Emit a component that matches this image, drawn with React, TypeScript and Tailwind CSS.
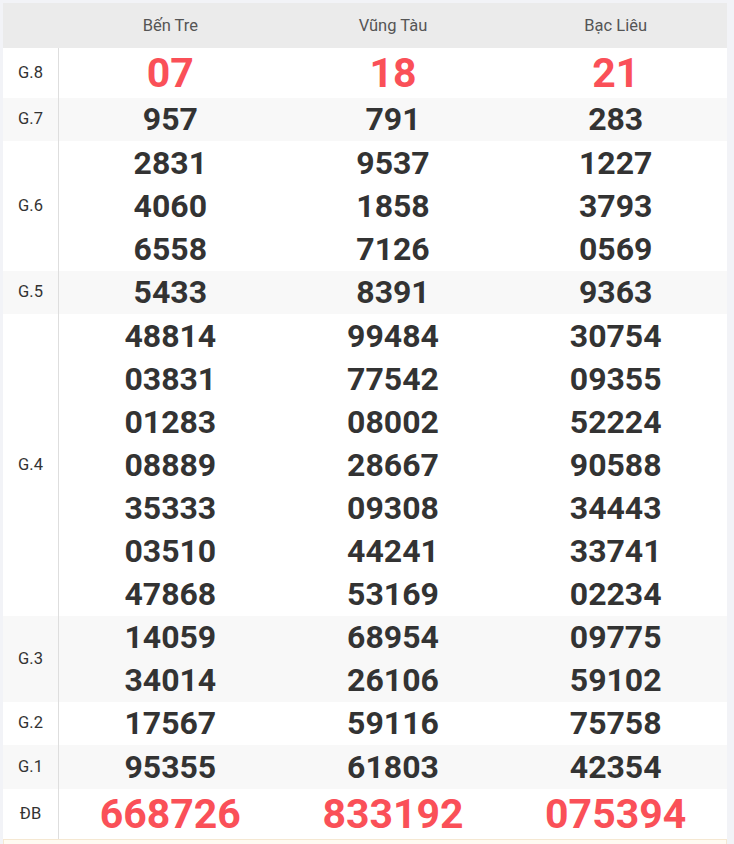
const provinces = ["Bến Tre", "Vũng Tàu", "Bạc Liêu"];

type Prize = { label: string; h: string; cols: string[][]; big?: boolean };

const prizes: Prize[] = [
  { label: "G.8", h: "h-[50px]", cols: [["07"], ["18"], ["21"]], big: true },
  { label: "G.7", h: "h-[43px]", cols: [["957"], ["791"], ["283"]] },
  {
    label: "G.6",
    h: "h-[130px]",
    cols: [
      ["2831", "4060", "6558"],
      ["9537", "1858", "7126"],
      ["1227", "3793", "0569"],
    ],
  },
  { label: "G.5", h: "h-[43px]", cols: [["5433"], ["8391"], ["9363"]] },
  {
    label: "G.4",
    h: "h-[302px]",
    cols: [
      ["48814", "03831", "01283", "08889", "35333", "03510", "47868"],
      ["99484", "77542", "08002", "28667", "09308", "44241", "53169"],
      ["30754", "09355", "52224", "90588", "34443", "33741", "02234"],
    ],
  },
  {
    label: "G.3",
    h: "h-[86px]",
    cols: [
      ["14059", "34014"],
      ["68954", "26106"],
      ["09775", "59102"],
    ],
  },
  { label: "G.2", h: "h-[43px]", cols: [["17567"], ["59116"], ["75758"]] },
  { label: "G.1", h: "h-[44px]", cols: [["95355"], ["61803"], ["42354"]] },
  { label: "ĐB", h: "h-[50px]", cols: [["668726"], ["833192"], ["075394"]], big: true },
];

export default function App() {
  return (
    <div
      className="min-h-[844px] bg-[#f2f3f7] pl-[3px] pr-[7px] pt-[3px]"
      style={{ fontFamily: "Roboto, 'Liberation Sans', sans-serif" }}
    >
      <div className="bg-white">
        <div className="grid grid-cols-[56px_1fr_1fr_1fr] h-[45px] bg-[#ebebeb] items-center">
          <div />
          {provinces.map((p) => (
            <div key={p} className="pt-[1px] text-center text-[16.5px] text-[#555]">
              {p}
            </div>
          ))}
        </div>
        {prizes.map((row, i) => (
          <div
            key={row.label}
            className={
              "grid grid-cols-[56px_1fr_1fr_1fr] " +
              row.h +
              " " +
              (i % 2 === 1 ? "bg-[#f8f8f8]" : "bg-white")
            }
          >
            <div className="flex items-center justify-center border-r border-[#dedede] text-[16.5px] text-[#333]">
              {row.label}
            </div>
            {row.cols.map((nums, c) => (
              <div key={c} className="flex flex-col items-center justify-center">
                {nums.map((n, k) =>
                  row.big ? (
                    <div
                      key={k}
                      className="leading-[50px] text-[41px] font-bold text-[#fa5058]"
                    >
                      {n}
                    </div>
                  ) : (
                    <div
                      key={k}
                      className="leading-[43px] text-[32px] font-bold text-[#333]"
                    >
                      {n}
                    </div>
                  )
                )}
              </div>
            ))}
          </div>
        ))}
        <div className="h-[10px] bg-[#fffbf2] border border-[#f5e8d2]" />
      </div>
    </div>
  );
}
